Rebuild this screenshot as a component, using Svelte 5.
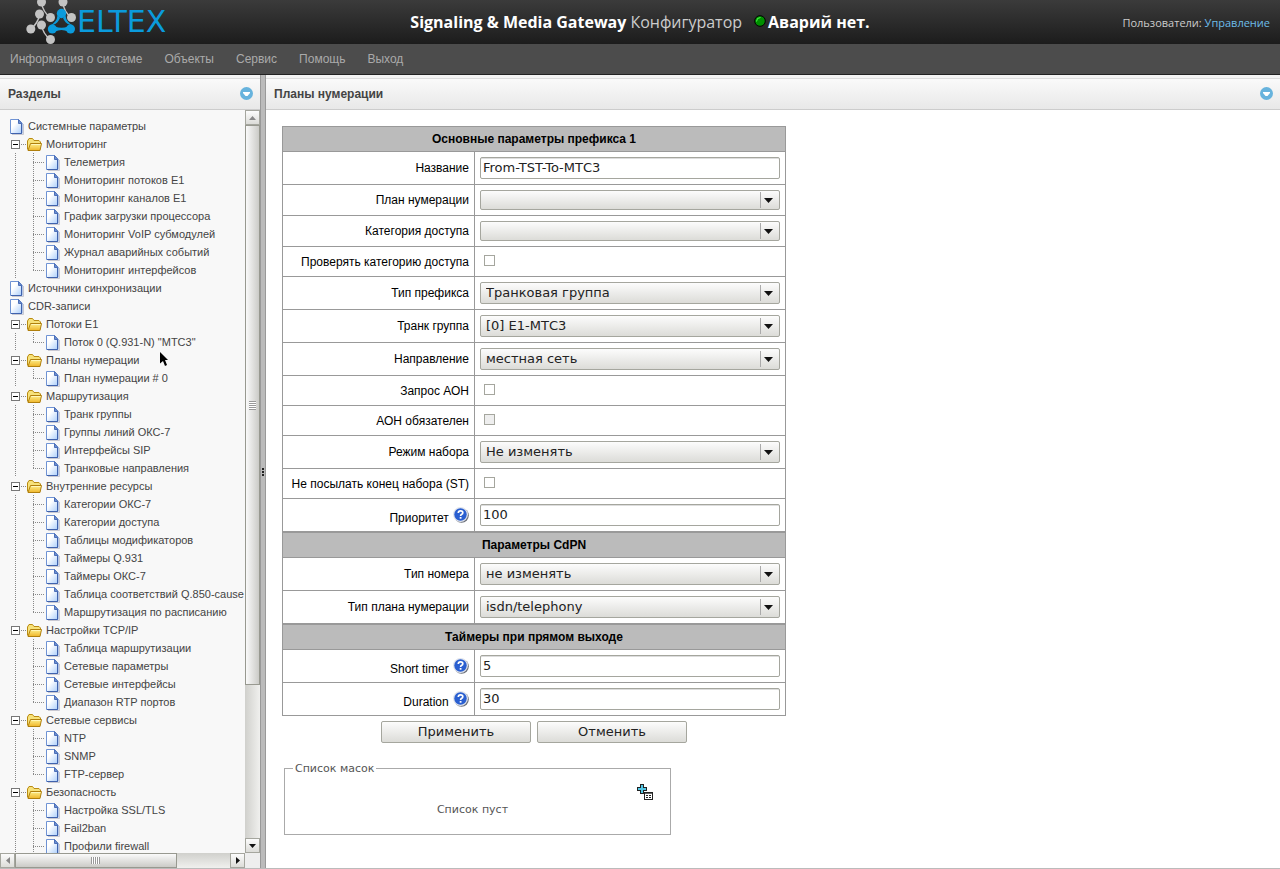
<script>
  const menu = ['Информация о системе', 'Объекты', 'Сервис', 'Помощь', 'Выход'];

  const tree = [
    { label: 'Системные параметры' },
    {
      label: 'Мониторинг',
      items: [
        'Телеметрия',
        'Мониторинг потоков E1',
        'Мониторинг каналов E1',
        'График загрузки процессора',
        'Мониторинг VoIP субмодулей',
        'Журнал аварийных событий',
        'Мониторинг интерфейсов'
      ]
    },
    { label: 'Источники синхронизации' },
    { label: 'CDR-записи' },
    { label: 'Потоки E1', items: ['Поток 0 (Q.931-N) "МТС3"'] },
    { label: 'Планы нумерации', items: ['План нумерации # 0'] },
    {
      label: 'Маршрутизация',
      items: ['Транк группы', 'Группы линий ОКС-7', 'Интерфейсы SIP', 'Транковые направления']
    },
    {
      label: 'Внутренние ресурсы',
      items: [
        'Категории ОКС-7',
        'Категории доступа',
        'Таблицы модификаторов',
        'Таймеры Q.931',
        'Таймеры ОКС-7',
        'Таблица соответствий Q.850-cause',
        'Маршрутизация по расписанию'
      ]
    },
    {
      label: 'Настройки TCP/IP',
      items: ['Таблица маршрутизации', 'Сетевые параметры', 'Сетевые интерфейсы', 'Диапазон RTP портов']
    },
    { label: 'Сетевые сервисы', items: ['NTP', 'SNMP', 'FTP-сервер'] },
    { label: 'Безопасность', items: ['Настройка SSL/TLS', 'Fail2ban', 'Профили firewall'] }
  ];

  const sections = [
    {
      title: 'Основные параметры префикса 1',
      rows: [
        { id: 'name', label: 'Название', type: 'text', value: 'From-TST-To-МТС3' },
        { id: 'plan', label: 'План нумерации', type: 'select', value: '' },
        { id: 'access', label: 'Категория доступа', type: 'select', value: '' },
        { id: 'check', label: 'Проверять категорию доступа', type: 'check' },
        { id: 'ptype', label: 'Тип префикса', type: 'select', value: 'Транковая группа' },
        { id: 'trunk', label: 'Транк группа', type: 'select', value: '[0] E1-МТС3' },
        { id: 'dir', label: 'Направление', type: 'select', value: 'местная сеть' },
        { id: 'aon', label: 'Запрос АОН', type: 'check' },
        { id: 'aonreq', label: 'АОН обязателен', type: 'check', disabled: true },
        { id: 'dial', label: 'Режим набора', type: 'select', value: 'Не изменять' },
        { id: 'st', label: 'Не посылать конец набора (ST)', type: 'check' },
        { id: 'prio', label: 'Приоритет', type: 'text', value: '100', help: true }
      ]
    },
    {
      title: 'Параметры CdPN',
      rows: [
        { id: 'numtype', label: 'Тип номера', type: 'select', value: 'не изменять' },
        { id: 'plantype', label: 'Тип плана нумерации', type: 'select', value: 'isdn/telephony' }
      ]
    },
    {
      title: 'Таймеры при прямом выходе',
      rows: [
        { id: 'short', label: 'Short timer', type: 'text', value: '5', help: true },
        { id: 'duration', label: 'Duration', type: 'text', value: '30', help: true }
      ]
    }
  ];
</script>

{#snippet doc()}
  <svg class="doc" width="20" height="18" viewBox="-5 -2 20 18" aria-hidden="true">
    <path d="M2 15.500H13.500V5" fill="none" stroke="#c9c9d2" />
    <path d="M.5 .5H8.500L12 4.500V14.500H.5Z" fill="url(#paper)" stroke="#6f93d4" />
    <path d="M11.500 5V14.500H1" fill="none" stroke="#3f62ad" />
    <path d="M8.500 .5V4.500H12Z" fill="#6f93d4" stroke="#4c6fb8" />
  </svg>
{/snippet}

{#snippet folder()}
  <svg class="folder" width="20" height="16" viewBox="-4 -2 20 16" aria-hidden="true">
    <path d="M.5 11.500V3L2 .5H5.500L7 2.500H12L13.500 4V6" fill="#f7e27a" stroke="#b98b12" />
    <path d="M1 12.500L3.500 5.500H14.500L13 12.500Z" fill="url(#gold)" stroke="#b07f0c" />
    <path d="M4.300 6.500H13.500" stroke="#fff7b8" />
  </svg>
{/snippet}

{#snippet down()}
  <svg width="13" height="13" viewBox="0 0 13 13" aria-hidden="true">
    <circle cx="6.500" cy="6.500" r="6.500" fill="#67b3dd" />
    <path d="M3 5H10V6L7.500 9H5.500L3 6Z" fill="#fff" />
  </svg>
{/snippet}

<svg class="defs" width="0" height="0" aria-hidden="true">
  <linearGradient id="paper" x1="0" y1="0" x2="1" y2="1">
    <stop offset=".35" stop-color="#fff" /><stop offset="1" stop-color="#a9cdfb" />
  </linearGradient>
  <linearGradient id="gold" x1="0" y1="0" x2="0" y2="1">
    <stop offset="0" stop-color="#fdf08c" /><stop offset="1" stop-color="#efb52a" />
  </linearGradient>
</svg>

<div class="page">
  <header>
    <div class="logo">
      <svg width="51" height="44" viewBox="0 0 51 44" aria-hidden="true">
        <g fill="#c3c3c3">
          <path stroke="#c3c3c3" stroke-width="1.500" fill="none" d="M15.500 3Q17 12 24 17M13.500 15Q12 23 5 29M37 3Q38 12 45 17M15.500 25Q17 34 24 39" />
          <circle cx="15.500" cy="2" r="4.500" /><circle cx="37" cy="2" r="4.500" />
          <circle cx="13.500" cy="14" r="4.500" /><circle cx="24.500" cy="17.500" r="4.500" />
          <circle cx="45.500" cy="17.500" r="4.500" /><circle cx="4.800" cy="29" r="4.500" />
          <circle cx="15.500" cy="25" r="4.500" /><circle cx="24.500" cy="39.500" r="4.500" />
        </g>
        <g fill="#0b9bdc">
          <circle cx="35.500" cy="13.500" r="4.700" /><circle cx="26.300" cy="29" r="4.500" /><circle cx="44.500" cy="29" r="4.500" />
          <path d="M31.500 15.500L34 18Q32 23 27.500 24.700L24 25.500Q31 22 31.500 15.500M39.500 15.500L37 18Q39 23 43.500 24.700L47 25.500Q40 22 39.500 15.500M29 26.500Q35.500 29 42 26.500V31.500Q35.500 28.500 29 31.500Z" />
        </g>
      </svg>
      <span class="wordmark">ELTEX</span>
    </div>
    <div class="title">
      <b>Signaling &amp; Media Gateway</b>
      <span class="light">Конфигуратор</span>
      <svg class="led" width="12" height="12" viewBox="0 0 12 12" aria-hidden="true">
        <circle cx="6" cy="6" r="5.300" fill="#008f00" stroke="#000" />
        <path d="M2.500 6.500A4 4 0 0 1 6.500 2.500" fill="none" stroke="#4dfc4d" />
      </svg><b>Аварий нет.</b>
    </div>
    <div class="users">Пользователи: <a href="#users">Управление</a></div>
  </header>

  <nav>
    {#each menu as item}<a href="#menu">{item}</a>{/each}
  </nav>

  <div class="body">
    <aside>
      <div class="bar"><h2>Разделы</h2>{@render down()}</div>
      <div class="scroller">
        <div class="view">
          <ul>
            {#each tree as node}
              <li>
                <a class="row" href="#node">
                  {#if node.items}
                    <span class="cell toggle"></span>
                    <span class="cell">{@render folder()}</span>
                  {:else}
                    <span class="cell">{@render doc()}</span>
                  {/if}
                  <span class="text">{node.label}</span>
                </a>
                {#if node.items}
                  <ul>
                    {#each node.items as leaf, i}
                      <li>
                        <a class="row" href="#leaf">
                          <span class="cell line"></span>
                          <span class="cell line branch" class:last={i === node.items.length - 1 && node.label !== 'Безопасность'}></span>
                          <span class="cell">{@render doc()}</span>
                          <span class="text">{leaf}</span>
                        </a>
                      </li>
                    {/each}
                  </ul>
                {/if}
              </li>
            {/each}
          </ul>
        </div>
        <div class="vbar">
          <span class="step"><svg width="7" height="4"><path d="M0 4L3.500 0L7 4Z" fill="#888" /></svg></span>
          <span class="vthumb"><i></i></span>
          <span class="vtrack"></span>
          <span class="step"><svg width="7" height="4"><path d="M0 0L3.500 4L7 0Z" fill="#111" /></svg></span>
        </div>
        <div class="hbar">
          <span class="step"><svg width="4" height="7"><path d="M4 0L0 3.500L4 7Z" fill="#888" /></svg></span>
          <span class="hthumb"><i></i></span>
          <span class="htrack"></span>
          <span class="step"><svg width="4" height="7"><path d="M0 0L4 3.500L0 7Z" fill="#111" /></svg></span>
        </div>
      </div>
    </aside>
    <div class="split"><i></i><i></i><i></i></div>
    <main>
      <div class="bar"><h2>Планы нумерации</h2>{@render down()}</div>
      <div class="content">
        <form onsubmit={(e) => e.preventDefault()}>
          {#each sections as s}
            <table>
              <colgroup><col class="namecol" /><col /></colgroup>
              <thead><tr><th colspan="2">{s.title}</th></tr></thead>
              <tbody>
                {#each s.rows as r}
                  <tr class={r.type} class:empty={r.value === ''}>
                    <td class="name" class:helped={r.help}>
                      <label for={r.id}>{r.label}</label>
                      {#if r.help}
                        <svg class="help" width="16" height="16" viewBox="0 0 16 16" aria-hidden="true">
                          <circle cx="8.500" cy="8.500" r="7.300" fill="#6b6f78" />
                          <circle cx="7.500" cy="7.500" r="7.500" fill="#dfe3ec" />
                          <circle cx="7.500" cy="7.500" r="6.200" fill="#2a5fd0" />
                          <path d="M5.300 6Q5.300 3.900 7.600 3.900Q9.800 3.900 9.800 5.700Q9.800 6.800 8.400 7.500Q7.600 8 7.600 9" fill="none" stroke="#fff" stroke-width="1.700" />
                          <path d="M6.700 10H8.500V11.700H6.700Z" fill="#fff" />
                        </svg>
                      {/if}
                    </td>
                    <td class="field">
                      {#if r.type === 'text'}
                        <input type="text" id={r.id} value={r.value} />
                      {:else if r.type === 'select'}
                        <select id={r.id}><option>{r.value}</option></select>
                      {:else}
                        <input type="checkbox" id={r.id} disabled={r.disabled} />
                      {/if}
                    </td>
                  </tr>
                {/each}
              </tbody>
            </table>
          {/each}
          <div class="buttons">
            <button type="submit">Применить</button>
            <button type="reset">Отменить</button>
          </div>
        </form>
        <fieldset>
          <legend>Список масок</legend>
          <button class="add" type="button" aria-label="Добавить">
            <svg width="16" height="16" viewBox="0 0 16 16" shape-rendering="crispEdges">
              <path d="M3.500 .5H6.500V3.500H9.500V6.500H6.500V9.500H3.500V6.500H.5V3.500H3.500Z" fill="#52c6e4" stroke="#222" />
              <rect x="7.500" y="8.500" width="8" height="7" fill="#fff" stroke="#222" />
              <path d="M8 9.500H15" stroke="#666" />
              <path d="M9 11.500H11M12 11.500H14M9 13.500H11M12 13.500H14" stroke="#222" />
            </svg>
          </button>
          <p>Список пуст</p>
        </fieldset>
      </div>
    </main>
  </div>

  <svg class="pointer" width="9" height="15" viewBox="0 0 9 15" aria-hidden="true">
    <path d="M0 0L8 8H5L7 13L5 14L3 9L0 11.500Z" fill="#000" />
  </svg>
</div>

<style>
  :global(body) { margin: 0; background: #fff; }
  .page {
    position: relative;
    display: flex;
    flex-direction: column;
    height: 100vh;
    overflow: hidden;
    font-family: "Liberation Sans", Arial, sans-serif;
    font-size: 12px;
    color: #444;
  }
  .page :is(svg) { display: block; flex: none; }
  .defs { position: absolute; }
  a { color: inherit; text-decoration: none; }

  header {
    display: grid;
    grid-template-columns: 1fr auto 1fr;
    align-items: center;
    height: 44px;
    flex: none;
    background: linear-gradient(#3b3b3b, #1c1c1c);
    color: #ccc;
    font-family: "Open Sans", sans-serif;
  }
  .logo { display: flex; align-items: center; padding-left: 26px; height: 44px; }
  .wordmark { color: #0b9bdc; font: 30px/44px "DejaVu Sans", sans-serif; }
  .title { display: flex; align-items: center; font-size: 16px; line-height: 22px; white-space: pre; }
  .title b { color: #fff; }
  .title .light { margin: 0 12px 0 4px; }
  .led { margin: 0 2px 2px 0; }
  .users { justify-self: end; padding-right: 10px; font-size: 11px; }
  .users a { color: #6dbce8; }

  nav {
    display: flex;
    gap: 22px;
    padding-left: 10px;
    height: 30px;
    flex: none;
    line-height: 30px;
    font-size: 12px;
    background: #4c4c4c;
    border-bottom: 1px solid #222;
    color: #aaa;
  }

  .body { display: flex; flex: 1; min-height: 0; border-bottom: 1px solid #bbb; }
  aside { display: flex; flex-direction: column; width: 260px; flex: none; background: #f8f8f8; }
  main { display: flex; flex-direction: column; flex: 1; min-width: 0; }
  .bar {
    display: flex;
    align-items: center;
    justify-content: space-between;
    box-sizing: border-box;
    height: 35px;
    flex: none;
    padding: 0 7px 0 8px;
    border-top: 3px solid #f4f4f4;
    border-bottom: 1px solid #ccc;
    background: linear-gradient(#ddd 0 1px, #fafafa 1px, #e8e8e8);
  }
  h2 { margin: 0; font-size: 12px; line-height: 16px; color: #444; }
  .split {
    display: flex;
    flex-direction: column;
    align-items: center;
    justify-content: center;
    gap: 1px;
    box-sizing: border-box;
    width: 6px;
    flex: none;
    border: 1px solid #999;
    border-width: 0 1px;
    background: #bbb;
  }
  .split i { width: 2px; height: 2px; background: #222; }

  .scroller {
    display: grid;
    grid-template: minmax(0, 1fr) 15px / minmax(0, 1fr) 15px;
    flex: 1;
    min-height: 0;
    background: #eee;
  }
  .view { overflow: hidden; padding: 7px 0 0 6px; background: #f8f8f8; }
  ul { list-style: none; margin: 0; padding: 0; }
  .row { display: flex; height: 18px; line-height: 18px; font-size: 11px; white-space: nowrap; }
  .cell { position: relative; display: flex; align-items: center; justify-content: center; width: 18px; flex: none; }
  .text { margin-left: 4px; }
  .toggle::before {
    content: "";
    box-sizing: border-box;
    width: 9px;
    height: 9px;
    border: 1px solid #777;
    background: linear-gradient(#000, #000) center / 5px 1px no-repeat #fff;
  }
  .toggle::after, .branch::after {
    content: "";
    position: absolute;
    right: -3px;
    top: 9px;
    width: 6px;
    height: 1px;
    background: repeating-linear-gradient(90deg, #888 0 1px, transparent 1px 2px);
  }
  .branch::after { right: -2px; width: 11px; }
  .line::before {
    content: "";
    position: absolute;
    left: 9px;
    top: 0;
    width: 1px;
    height: 18px;
    background: repeating-linear-gradient(#888 0 1px, transparent 1px 2px);
  }
  .last::before { height: 10px; }

  .vbar { display: flex; flex-direction: column; background: linear-gradient(90deg, #d0d0cc, #f0f0ee); }
  .hbar { display: flex; background: linear-gradient(#d0d0cc, #f0f0ee); }
  .step {
    display: flex;
    align-items: center;
    justify-content: center;
    box-sizing: border-box;
    width: 15px;
    height: 15px;
    flex: none;
    border: 1px solid #a5a69e;
    background: linear-gradient(#fcfcfc, #dcdcd8);
  }
  .vthumb, .hthumb { display: flex; align-items: center; justify-content: center; box-sizing: border-box; border: 1px solid #989990; }
  .vthumb { flex: 560; background: linear-gradient(90deg, #fafafa, #cbcbc7); }
  .vtrack { flex: 153; }
  .hthumb { flex: 161; background: linear-gradient(#fafafa, #cbcbc7); }
  .htrack { flex: 54; }
  .vthumb i { width: 7px; height: 9px; background: repeating-linear-gradient(#999 0 1px, #fff 1px 2px); }
  .hthumb i { width: 9px; height: 7px; background: repeating-linear-gradient(90deg, #999 0 1px, #fff 1px 2px); }

  .content { flex: 1; min-height: 0; padding: 16px; overflow: hidden; }
  form { width: 504px; }
  table {
    width: 100%;
    table-layout: fixed;
    border-collapse: separate;
    border-spacing: 0;
    border: 1px solid #999;
    border-bottom: 0;
    color: #000;
  }
  .namecol { width: 192px; }
  th, td { box-sizing: border-box; padding: 0 5px; border-bottom: 1px solid #999; height: 33px; }
  th { height: 25px; background: #bbb; font-size: 12px; line-height: 16px; }
  .empty td { height: 31px; }
  .check td { height: 30px; }
  .name { text-align: right; border-right: 1px solid #999; white-space: nowrap; }
  .name label { line-height: 16px; }
  .helped { padding-top: 2px; }
  .page .help { display: inline-block; margin-left: 1px; vertical-align: -1px; }
  .field { line-height: 0; }
  .field input, select, button { font-family: "DejaVu Sans", sans-serif; font-size: 13px; color: #222; }
  input[type="text"], select {
    display: block;
    box-sizing: border-box;
    width: 100%;
    height: 22px;
    margin: 0;
    border: 1px solid #a5a69e;
    border-radius: 2px;
    line-height: 16px;
  }
  input[type="text"] { padding: 0 2px 2px; background: #fff; box-shadow: inset 0 1px #ddd; outline: 0; }
  select {
    appearance: none;
    padding: 0 24px 0 5px;
    background:
      url("data:image/svg+xml,%3Csvg xmlns='http://www.w3.org/2000/svg' width='9' height='5'%3E%3Cpath d='M0 0H9L4.500 5Z' fill='%23111'/%3E%3C/svg%3E") right 6px center no-repeat,
      linear-gradient(#aaa, #aaa) right 18px center / 1px 16px no-repeat,
      linear-gradient(#fcfcfc, #dcdcd8);
  }
  .empty select { height: 20px; }
  input[type="checkbox"] {
    appearance: none;
    display: block;
    box-sizing: border-box;
    width: 11px;
    height: 11px;
    margin: 0 4px 2px;
    border: 1px solid #a5a69e;
    background: #fff;
  }
  input[type="checkbox"]:disabled { background: #eee; }

  .buttons { display: flex; justify-content: center; gap: 6px; padding-top: 5px; }
  .buttons button {
    width: 150px;
    height: 22px;
    padding: 0 0 1px;
    border: 1px solid #a5a69e;
    border-radius: 2px;
    background: linear-gradient(#fcfcfc, #dcdcd8);
    line-height: 16px;
  }
  fieldset {
    box-sizing: border-box;
    width: 387px;
    margin: 17px 2px 0;
    padding: 0 17px 16px;
    border: 1px solid #aaa;
    font: 11px/16px "DejaVu Sans", sans-serif;
    color: #555;
  }
  legend { margin-left: -9px; padding: 1px 2px 0; }
  .add { display: block; margin: 7px 0 0 auto; padding: 0; border: 0; background: none; }
  p { margin: 2px 0 0; padding-right: 10px; text-align: center; }
  .pointer { position: absolute; left: 160px; top: 352px; }
</style>
